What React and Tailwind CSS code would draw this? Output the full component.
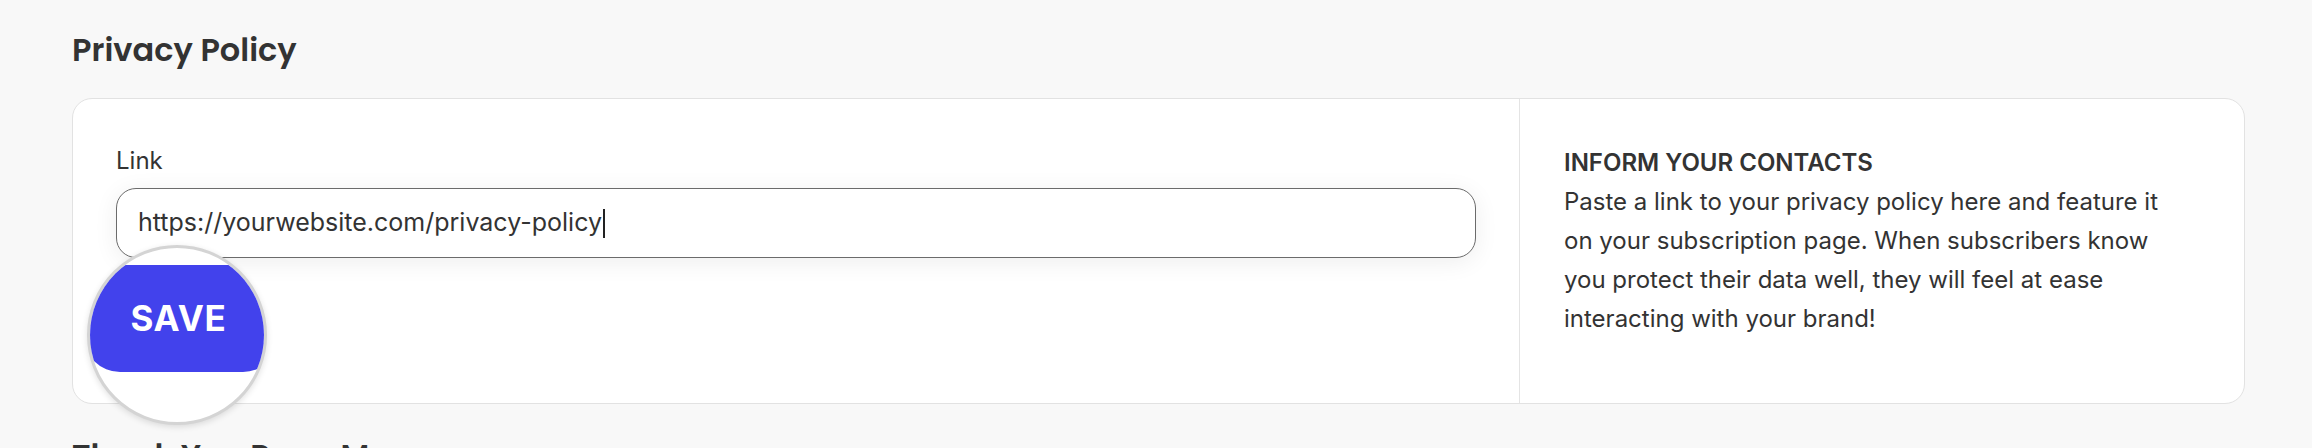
import React from 'react';

function Lens() {
  // magnified view of the save button
  return (
    <div className="absolute left-[14px] top-[146px] w-[180px] h-[180px] rounded-full border-[3px] border-[#d4d4d4] bg-white overflow-hidden shadow-[0_2px_6px_rgba(0,0,0,0.12)]">
      <div className="absolute left-[-6px] top-[17px] w-[195px] h-[107px] rounded-[36px] bg-[#4242ec] flex items-center justify-center pr-[6px]">
        <span className="text-white text-[35px] font-bold tracking-[0.02em] font-['Inter',sans-serif] leading-none">
          SAVE
        </span>
      </div>
    </div>
  );
}

export default function App() {
  return (
    <div className="w-full h-[448px] overflow-hidden bg-[#f8f8f8] pl-[72px] pr-[67px] pt-[30px] text-[#333333] font-['Inter',sans-serif]">
      <h2 className="text-[32px] leading-[40px] font-semibold font-['Poppins','Lato',sans-serif] text-[#333333]">
        Privacy Policy
      </h2>

      <div className="mt-[28px] flex h-[306px] rounded-[20px] border border-[#e2e2e2] bg-white">
        {/* Link field */}
        <div className="relative flex-1 pl-[43px] pr-[43px] pt-[44px]">
          <label className="block text-[24px] leading-[36px]">Link</label>
          <div className="mt-[9px] flex h-[70px] items-center rounded-[20px] border border-[#6b6b6b] bg-white px-[21px] text-[25px] shadow-[0_4px_24px_rgba(0,0,0,0.07)]">
            <span>https://yourwebsite.com/privacy-policy</span>
            <span className="ml-[1px] inline-block h-[29px] w-[2px] bg-[#222222]" />
          </div>
          <Lens />
        </div>

        {/* Info */}
        <div className="w-[725px] border-l border-[#e4e4e4] pl-[44px] pr-[52px] pt-[44px] text-[24px] leading-[39px]">
          <p className="font-semibold">INFORM YOUR CONTACTS</p>
          <p>
            Paste a link to your privacy policy here and feature it on your subscription page. When subscribers know you protect their data well, they will feel at ease interacting with your brand!
          </p>
        </div>
      </div>

      <h2 className="mt-[32px] text-[32px] leading-[40px] font-semibold font-['Poppins','Lato',sans-serif] text-[#333333]">
        Thank You Page Message
      </h2>
    </div>
  );
}
